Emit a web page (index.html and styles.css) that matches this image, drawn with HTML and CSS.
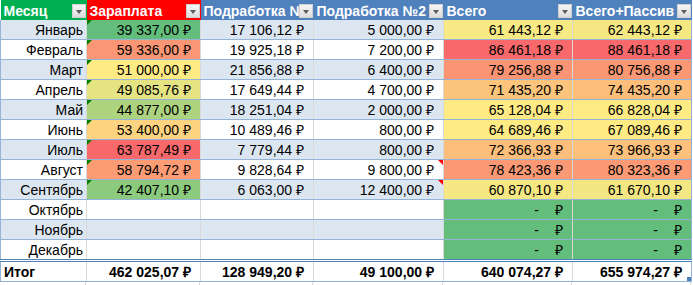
FILE: index.html
```html
<!DOCTYPE html>
<html lang="ru">
<head>
<meta charset="utf-8">
<link rel="stylesheet" href="styles.css">
</head>
<body>
<table class="sheet">
  <colgroup>
    <col class="c1"><col class="c2"><col class="c3"><col class="c4"><col class="c5"><col class="c6">
  </colgroup>
  <thead>
    <tr>
      <th class="h-green"><span class="ht">Месяц</span><span class="dd"></span></th>
      <th class="h-red"><span class="ht">Зараплата</span><span class="dd"></span></th>
      <th class="h-blue"><span class="ht">Подработка №1</span><span class="dd"></span></th>
      <th class="h-blue"><span class="ht">Подработка №2</span><span class="dd"></span></th>
      <th class="h-blue"><span class="ht">Всего</span><span class="dd"></span></th>
      <th class="h-blue"><span class="ht">Всего+Пассив</span><span class="dd"></span></th>
    </tr>
  </thead>
  <tbody>
    <tr class="band">
      <td class="m">Январь</td>
      <td class="n tri" style="background:rgb(99,190,123)">39 337,00 ₽</td>
      <td class="n">17 106,12 ₽</td>
      <td class="n">5 000,00 ₽</td>
      <td class="n" style="background:rgb(247,233,132)">61 443,12 ₽</td>
      <td class="n" style="background:rgb(245,232,131)">62 443,12 ₽</td>
    </tr>
    <tr>
      <td class="m">Февраль</td>
      <td class="n tri" style="background:rgb(250,150,116)">59 336,00 ₽</td>
      <td class="n">19 925,18 ₽</td>
      <td class="n">7 200,00 ₽</td>
      <td class="n" style="background:rgb(248,105,107)">86 461,18 ₽</td>
      <td class="n" style="background:rgb(248,105,107)">88 461,18 ₽</td>
    </tr>
    <tr class="band">
      <td class="m">Март</td>
      <td class="n tri" style="background:rgb(255,235,132)">51 000,00 ₽</td>
      <td class="n">21 856,88 ₽</td>
      <td class="n">6 400,00 ₽</td>
      <td class="n" style="background:rgb(250,148,115)">79 256,88 ₽</td>
      <td class="n" style="background:rgb(251,152,116)">80 756,88 ₽</td>
    </tr>
    <tr>
      <td class="m">Апрель</td>
      <td class="n tri" style="background:rgb(229,228,131)">49 085,76 ₽</td>
      <td class="n">17 649,44 ₽</td>
      <td class="n">4 700,00 ₽</td>
      <td class="n" style="background:rgb(253,196,124)">71 435,20 ₽</td>
      <td class="n" style="background:rgb(253,190,123)">74 435,20 ₽</td>
    </tr>
    <tr class="band">
      <td class="m">Май</td>
      <td class="n tri" style="background:rgb(173,211,127)">44 877,00 ₽</td>
      <td class="n">18 251,04 ₽</td>
      <td class="n">2 000,00 ₽</td>
      <td class="n" style="background:rgb(255,234,132)">65 128,04 ₽</td>
      <td class="n" style="background:rgb(255,235,132)">66 828,04 ₽</td>
    </tr>
    <tr>
      <td class="m">Июнь</td>
      <td class="n tri" style="background:rgb(254,211,127)">53 400,00 ₽</td>
      <td class="n">10 489,46 ₽</td>
      <td class="n">800,00 ₽</td>
      <td class="n" style="background:rgb(254,235,132)">64 689,46 ₽</td>
      <td class="n" style="background:rgb(255,234,132)">67 089,46 ₽</td>
    </tr>
    <tr class="band">
      <td class="m">Июль</td>
      <td class="n tri" style="background:rgb(248,105,107)">63 787,49 ₽</td>
      <td class="n">7 779,44 ₽</td>
      <td class="n">800,00 ₽</td>
      <td class="n" style="background:rgb(253,190,123)">72 366,93 ₽</td>
      <td class="n" style="background:rgb(253,193,124)">73 966,93 ₽</td>
    </tr>
    <tr>
      <td class="m">Август</td>
      <td class="n tri" style="background:rgb(251,156,117)">58 794,72 ₽</td>
      <td class="n">9 828,64 ₽</td>
      <td class="n note">9 800,00 ₽</td>
      <td class="n" style="background:rgb(251,153,116)">78 423,36 ₽</td>
      <td class="n" style="background:rgb(251,154,116)">80 323,36 ₽</td>
    </tr>
    <tr class="band">
      <td class="m">Сентябрь</td>
      <td class="n tri" style="background:rgb(140,202,125)">42 407,10 ₽</td>
      <td class="n">6 063,00 ₽</td>
      <td class="n note">12 400,00 ₽</td>
      <td class="n" style="background:rgb(245,232,131)">60 870,10 ₽</td>
      <td class="n" style="background:rgb(243,231,131)">61 670,10 ₽</td>
    </tr>
    <tr>
      <td class="m">Октябрь</td>
      <td></td><td></td><td></td>
      <td class="n zero"><span class="dash">-</span>₽</td>
      <td class="n zero"><span class="dash">-</span>₽</td>
    </tr>
    <tr class="band">
      <td class="m">Ноябрь</td>
      <td></td><td></td><td></td>
      <td class="n zero"><span class="dash">-</span>₽</td>
      <td class="n zero"><span class="dash">-</span>₽</td>
    </tr>
    <tr>
      <td class="m">Декабрь</td>
      <td></td><td></td><td></td>
      <td class="n zero"><span class="dash">-</span>₽</td>
      <td class="n zero"><span class="dash">-</span>₽</td>
    </tr>
  </tbody>
  <tfoot>
    <tr class="total">
      <td class="lbl">Итог</td>
      <td class="n">462 025,07 ₽</td>
      <td class="n">128 949,20 ₽</td>
      <td class="n">49 100,00 ₽</td>
      <td class="n">640 074,27 ₽</td>
      <td class="n last">655 974,27 ₽<span class="handle"></span></td>
    </tr>
  </tfoot>
</table>
<div class="after">
  <span></span><span></span><span></span><span></span><span></span><span></span>
</div>
</body>
</html>
```

FILE: styles.css
```css
html, body {
  margin: 0;
  padding: 0;
  background: #ffffff;
}
body {
  font-family: "Liberation Sans", Arial, sans-serif;
  font-size: 14px;
  color: #000;
  width: 693px;
  height: 285px;
  overflow: hidden;
}
.sheet {
  border-collapse: collapse;
  table-layout: fixed;
  width: 691px;
}
.c1 { width: 86px; }
.c2 { width: 114px; }
.c3 { width: 113px; }
.c4 { width: 130px; }
.c5 { width: 129px; }
.c6 { width: 119px; }

th {
  height: 20px;
  padding: 0;
  position: relative;
  text-align: left;
  color: #fff;
  font-weight: bold;
  white-space: nowrap;
  overflow: hidden;
  border: 0;
  line-height: 20px;
}
.h-green { background: #00B050; }
.h-red { background: #FF0000; }
.h-blue { background: #4F81BD; }
.ht {
  display: block;
  height: 20px;
  padding: 3px 0 0 3px;
  box-sizing: border-box;
  line-height: 17px;
  overflow: hidden;
}
.dd {
  position: absolute;
  right: 1px;
  top: 4px;
  width: 14px;
  height: 14px;
  box-sizing: border-box;
  border: 1px solid #d0d0d0;
  background: linear-gradient(#f6f6f6, #dcdcdc);
}
.dd::after {
  content: "";
  position: absolute;
  left: 3px;
  top: 5px;
  border-left: 3.5px solid transparent;
  border-right: 3.5px solid transparent;
  border-top: 4px solid #5b5b5b;
}

td {
  height: 19px;
  padding: 2px 0 0 0;
  box-sizing: border-box;
  border-bottom: 1px solid #95B3D7;
  border-right: 1px solid #d9d9d9;
  white-space: nowrap;
  position: relative;
  line-height: 17px;
}
tbody td:first-child, tfoot td:first-child {
  border-left: 1px solid #95B3D7;
}
tbody td:last-child, tfoot td:last-child {
  border-right: 1px solid #95B3D7;
}
tr.band td { background: #DCE6F1; }
.m { text-align: right; padding-right: 3px; }
.n { text-align: right; padding-right: 9px; }
.zero { background: rgb(99,190,123) !important; }
.dash { margin-right: 16px; }

.tri::before {
  content: "";
  position: absolute;
  left: 0;
  top: 0;
  border-top: 5px solid #008000;
  border-right: 5px solid transparent;
}
.note::after {
  content: "";
  position: absolute;
  right: 0;
  top: 0;
  border-top: 5px solid #ff0000;
  border-left: 5px solid transparent;
}

tr.total td {
  font-weight: bold;
  border-top: 3px double #4F81BD;
  height: 20px;
  background: #fff;
}
.lbl { text-align: left; padding-left: 3px; }
.handle {
  position: absolute;
  right: 0;
  bottom: 0;
  width: 4px;
  height: 4px;
  background: #4F81BD;
}
.after {
  display: grid;
  grid-template-columns: 86px 114px 113px 130px 129px 119px;
  height: 10px;
}
.after span {
  border-right: 1px solid #d9d9d9;
}
```
